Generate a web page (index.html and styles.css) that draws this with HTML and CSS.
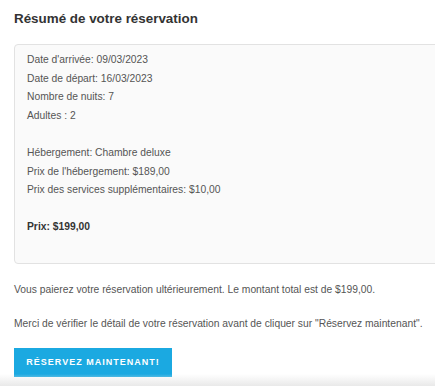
FILE: index.html
```html
<!DOCTYPE html>
<html lang="fr">

<head>
    <meta charset="utf-8">
    <title>Résumé de votre réservation</title>
    <meta name="viewport" content="width=device-width, initial-scale=1">
    <link rel="stylesheet" href="styles.css">
</head>

<body>
    <div class="summary">
        <h2 class="summary-title">Résumé de votre réservation</h2>
        <div class="summary-box">
            <div class="group">
                <p>Date d'arrivée: 09/03/2023</p>
                <p>Date de départ: 16/03/2023</p>
                <p>Nombre de nuits: 7</p>
                <p>Adultes : 2</p>
            </div>
            <div class="group">
                <p>Hébergement: Chambre deluxe</p>
                <p>Prix de l'hébergement: $189,00</p>
                <p>Prix des services supplémentaires: $10,00</p>
            </div>
            <div class="group">
                <p class="total">Prix: $199,00</p>
            </div>
        </div>
        <p class="note">Vous paierez votre réservation ultérieurement. Le montant total est de $199,00.</p>
        <p class="note">Merci de vérifier le détail de votre réservation avant de cliquer sur "Réservez maintenant".</p>
        <button class="btn-book">Réservez maintenant!</button>
    </div>
    <div class="bottom-fade"></div>
</body>

</html>
```

FILE: styles.css
```css
body {
    margin: 0;
    padding: 0;
    background-color: white;
    font-family: "Liberation Sans", Arial, sans-serif;
    color: #555;
    overflow: hidden;
}

.summary {
    padding: 10px 0 0 14px;
}

.summary-title {
    margin: 0 0 16px 0;
    font-size: 13.4px;
    font-weight: bold;
    color: #333;
    line-height: 18px;
}

.summary-box {
    display: flex;
    flex-direction: column;
    gap: 18px;
    margin-right: -20px;
    padding: 6px 12px 26px 12px;
    background-color: #fafafa;
    border: 1px solid #e2e2e2;
    border-radius: 4px;
}

.summary-box p {
    margin: 0;
    font-size: 10.3px;
    line-height: 18.7px;
}

.summary-box .total {
    font-weight: bold;
    color: #333;
}

.note {
    margin: 18px 0 0 0;
    font-size: 10.3px;
    line-height: 16px;
}

.note + .note {
    margin-top: 18px;
}

.btn-book {
    display: block;
    margin-top: 16px;
    width: 158px;
    height: 29px;
    padding: 0;
    border: none;
    background-color: #1ba9e1;
    color: white;
    font-family: inherit;
    font-size: 9px;
    font-weight: bold;
    letter-spacing: 1px;
    text-transform: uppercase;
}

.bottom-fade {
    position: absolute;
    left: 0;
    right: 0;
    bottom: 0;
    height: 12px;
    background: linear-gradient(to bottom, rgba(235, 235, 235, 0), #e9e9e9);
}
```
